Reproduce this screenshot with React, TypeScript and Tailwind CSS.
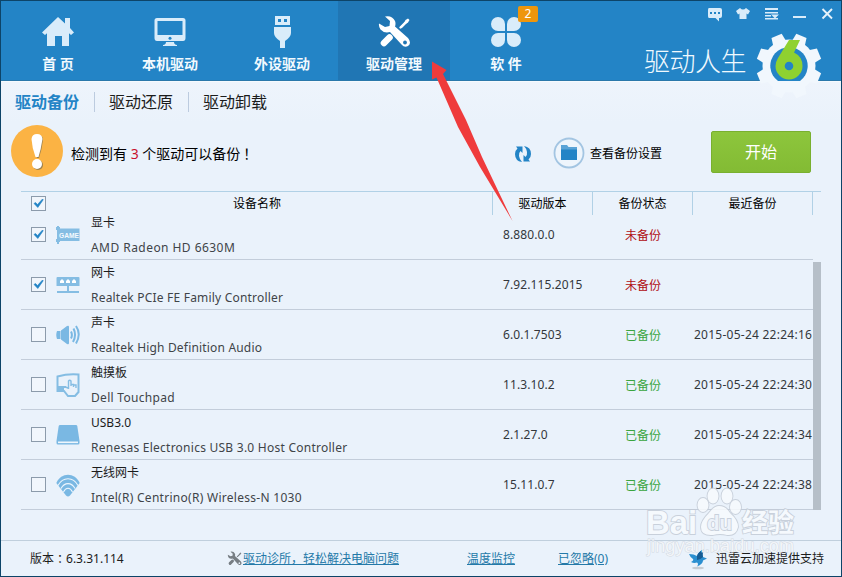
import React from 'react';
import { clsx } from 'clsx';

type Device = {
  type: string;
  name: string;
  version: string;
  date?: string;
  checked?: boolean;
  icon: React.ReactNode;
  tracking: string;
};

const HomeIcon = () => (
  <svg width="34" height="32" viewBox="0 0 34 32" fill="#d9ecfa">
    <path d="M17 1 L24 7.500 V2 H29 V12 L33 16.500 L30 19 L28 17.200 V30 H21 V20 H14 V30 H6 V17.200 L4 19 L1 16.500 Z" />
  </svg>
);

const MonitorIcon = () => (
  <svg width="34" height="32" viewBox="0 0 34 32">
    <path fill="#d9ecfa" fillRule="evenodd" d="M4 2 H30 Q32.500 2 32.500 4.500 V22 Q32.500 25 30 25 H4 Q1.500 25 1.500 22 V4.500 Q1.500 2 4 2 Z M4.500 5 V19 H29.500 V5 Z" />
    <circle cx="17" cy="22.300" r="1.500" fill="#2384c6" />
    <path fill="#d9ecfa" d="M13 26 H21 Q21 28.500 24 29 V30 H10 V29 Q13 28.500 13 26 Z" />
  </svg>
);

const UsbIcon = () => (
  <svg width="34" height="34" viewBox="0 0 34 34">
    <path fill="#d9ecfa" fillRule="evenodd" d="M10 1 H25 V10 H10 Z M13 4 V7 H16 V4 Z M19 4 V7 H22 V4 Z" />
    <path fill="#d9ecfa" d="M9 12 H26 V18 Q26 22 20 26 V33 H15 V26 Q9 22 9 18 Z" />
  </svg>
);

const ToolsIcon = ({ size = 34, color = '#fff', hole = '#2076b4' }: { size?: number; color?: string; hole?: string }) => (
  <svg width={size} height={size} viewBox="0 0 34 34" className="shrink-0">
    <path d="M24 12.500 L30 6.500" stroke={color} strokeWidth="1.800" />
    <path d="M27 8 L28.500 5 L31 3.500 L32.500 5 L31 7.500 L28.500 9 Z" fill={color} />
    <path d="M23.500 12.500 L28 8" stroke={color} strokeWidth="2.400" strokeLinecap="round" />
    <path d="M7 28 L12.500 22.500" stroke={color} strokeWidth="6.600" strokeLinecap="round" />
    <path d="M8 1.500 Q15 0 18 6 Q19 8.500 18 11.500 L31 23 Q35 28 31 31 Q27.500 33 24.500 29.500 L13 17 Q7 18.500 3.500 14.500 Q1.500 11.500 2 8.500 L8 12 L12.500 11 L13 6 Z" fill={color} />
    <circle cx="28" cy="27.500" r="1.900" fill={hole} />
  </svg>
);

const CloverIcon = () => (
  <svg width="32" height="32" viewBox="0 0 32 32" fill="#d9ecfa">
    <path d="M8 1 A7 7 0 0 1 15 8 V15 H8 A7 7 0 0 1 8 1 Z" />
    <path d="M24 1 A7 7 0 0 0 17 8 V15 H24 A7 7 0 0 0 24 1 Z" />
    <path d="M8 31 A7 7 0 0 0 15 24 V17 H8 A7 7 0 0 0 8 31 Z" />
    <path d="M24 31 A7 7 0 0 1 17 24 V17 H24 A7 7 0 0 1 24 31 Z" />
  </svg>
);

const GearLogo = () => (
  <svg width="68" height="68" viewBox="-34 -34 68 68" className="absolute left-[754px] top-[31px]">
    <g fill="#f1f7fd">
      <circle r="26.500" />
      {[22.5, 67.5, 112.5, 157.5, 202.5, 247.5, 292.5, 337.5].map((a) => (
        <path key={a} d="M-7 -24 L-5.500 -32.500 H5.500 L7 -24 Z" transform={`rotate(${a})`} />
      ))}
    </g>
    <path d="M-11 15 A18.700 18.700 0 1 1 11 15 Z" fill="#2384c6" />
    <path fill="#8fd130" fillRule="evenodd" d="M0 -26 H11 L5 -13.500 Q13.500 -9.500 13.500 0 A13.500 13.500 0 0 1 -13.500 0 Q-13.500 -4 -11 -8 Z M-4.300 0 A4.300 4.300 0 1 0 4.300 0 A4.300 4.300 0 1 0 -4.300 0 Z" />
  </svg>
);

const WindowControls = () => (
  <div className="absolute left-[706px] top-[6px] flex">
    <svg width="126" height="16" viewBox="0 0 126 16">
      <path fill="#d9ecfa" fillRule="evenodd" d="M2 1 H13 Q15 1 15 3 V9 Q15 11 13 11 H12 V14.500 L8.500 11 H2 Q1 11 1 9 V3 Q1 1 2 1 Z M3 5 V7 H5 V5 Z M7 5 V7 H9 V5 Z M11 5 V7 H13 V5 Z" />
      <path fill="#d9ecfa" d="M33 1 Q36 4 39 1 L43 4 L41 7.500 L39.500 6.500 V12 H32.500 V6.500 L31 7.500 L29 4 Z" />
      <path fill="#d9ecfa" d="M58 1 H71 V3 H58 Z M58 5 H71 V6.500 H58 Z M58 8 H64 V9.500 H58 Z M64 7.500 H72 L68 11.500 Z M58 11 H71 V12.500 H58 Z" />
      <path fill="#d9ecfa" d="M86 9 H99 V11 H86 Z" />
      <path stroke="#e5f2fb" strokeWidth="1.900" d="M115.500 2 L125 11.500 M125 2 L115.500 11.500" />
    </svg>
  </div>
);

const GameIcon = () => (
  <svg width="24" height="18" viewBox="0 0 24 18">
    <path d="M1 0 H3 V18 H1 Z M3 2.500 H23.500 V15 H3 Z M0 1 H4 V4 H0 Z M0 13 H4 V16 H0 Z" fill="#85bde3" />
    <text x="3" y="11.500" fontSize="7.500" fontWeight="700" textLength="20" lengthAdjust="spacingAndGlyphs" fill="#f4fafe" fontFamily="Liberation Sans, sans-serif">GAME</text>
  </svg>
);

const NetworkIcon = () => (
  <svg width="24" height="18" viewBox="0 0 24 18">
    <path d="M1.500 1 H22.500 Q23.500 1 23.500 2 V10 H0.500 V2 Q0.500 1 1.500 1 Z M11 10 H13 V15 H23 V17 H1 V15 H11 Z" fill="#85bde3" />
    <path d="M4 7 V4.500 H5 V3.500 H7 V4.500 H8 V7 Z M10 7 V4.500 H11 V3.500 H13 V4.500 H14 V7 Z M16 7 V4.500 H17 V3.500 H19 V4.500 H20 V7 Z" fill="#fff" />
  </svg>
);

const SpeakerIcon = () => (
  <svg width="24" height="22" viewBox="0 0 24 22" fill="none" stroke="#7ab8e3" strokeWidth="2">
    <path d="M1 7 H4.500 V15 H1 Q-0.500 11 1 7 Z M5 6.500 L11 2 Q13 1 13 3 V19 Q13 21 11 20 L5 15.500 Z" fill="#7ab8e3" stroke="none" />
    <path d="M15 7.500 Q16.800 11 15 14.500 M17.500 4.500 Q20.800 11 17 18 M20 2 Q25.500 10 20 19.500" />
  </svg>
);

const TouchpadIcon = () => (
  <svg width="24" height="24" viewBox="0 0 24 24" fill="none" stroke="#85bde3" strokeWidth="2">
    <path d="M1.500 3.500 Q12 0.500 22.500 1.500 V19 L19 23 H12 L8 18 H1.500 Z" />
    <path d="M2 14 H10 M7 14 V18" />
    <path d="M12.500 16 V8 Q13.700 6.500 15 8 V13 M15 11.500 H17.500 V14 M17.500 12 H20 V15 M12 15 L9.500 14" strokeWidth="1.400" />
    <path d="M2.500 15 H6 V17.500 H2.500 Z" fill="#85bde3" />
  </svg>
);

const DriveIcon = () => (
  <svg width="24" height="22" viewBox="0 0 24 22">
    <path d="M4 1 H20 Q21 1 21.300 2 L23.500 17 V19 Q23.500 20.500 22 20.500 H2 Q0.500 20.500 0.500 19 V17 L2.700 2 Q3 1 4 1 Z" fill="#7ab8e3" />
    <path d="M2 18.300 H22" stroke="#eef6fd" strokeWidth="1.600" />
  </svg>
);

const WifiIcon = () => (
  <svg width="24" height="23" viewBox="0 0 24 23">
    <path d="M0.300 9 C5 -2 19 -2 23.700 9 L14 21.500 Q12 23.500 10 21.500 Z" fill="#7ab8e3" />
    <path d="M2 11.500 C7 2.500 17 2.500 22 11.500 M5 14.500 C8.500 8 15.500 8 19 14.500 M7.500 18 C10 13 14 13 16.500 18" fill="none" stroke="#eef6fd" strokeWidth="1.100" />
  </svg>
);

const devices: Device[] = [
  { type: '显卡', name: 'AMD Radeon HD 6630M', version: '8.880.0.0', checked: true, icon: <GameIcon />, tracking: 'tracking-[0.45px]' },
  { type: '网卡', name: 'Realtek PCIe FE Family Controller', version: '7.92.115.2015', checked: true, icon: <NetworkIcon />, tracking: 'tracking-[0.2px]' },
  { type: '声卡', name: 'Realtek High Definition Audio', version: '6.0.1.7503', date: '2015-05-24 22:24:16', icon: <SpeakerIcon />, tracking: 'tracking-[0.18px]' },
  { type: '触摸板', name: 'Dell Touchpad', version: '11.3.10.2', date: '2015-05-24 22:24:30', icon: <TouchpadIcon />, tracking: 'tracking-[0.3px]' },
  { type: 'USB3.0', name: 'Renesas Electronics USB 3.0 Host Controller', version: '2.1.27.0', date: '2015-05-24 22:24:34', icon: <DriveIcon />, tracking: 'tracking-[0.25px]' },
  { type: '无线网卡', name: 'Intel(R) Centrino(R) Wireless-N 1030', version: '15.11.0.7', date: '2015-05-24 22:24:38', icon: <WifiIcon />, tracking: 'tracking-[0.28px]' },
];

const navItems = [
  { label: '首 页', icon: <HomeIcon /> },
  { label: '本机驱动', icon: <MonitorIcon /> },
  { label: '外设驱动', icon: <UsbIcon /> },
  { label: '驱动管理', icon: <ToolsIcon />, active: true },
  { label: '软 件', icon: <CloverIcon />, badge: '2' },
];

const Checkbox = ({ checked }: { checked?: boolean }) => (
  <span className="flex h-[15px] w-[15px] shrink-0 items-center justify-center border border-[#8c9bab] bg-[#f1f6fc]">
    {checked && (
      <svg width="11" height="11" viewBox="0 0 11 11">
        <path d="M1 5.500 L2.500 4.500 L4.500 6.500 L9.500 1 L10.200 1.800 L4.800 9.500 Z" fill="#2384c6" stroke="#2384c6" strokeWidth="0.600" />
      </svg>
    )}
  </span>
);

// Paw logo and site name over the bottom right corner
const Watermark = () => (
  <svg width="160" height="75" viewBox="0 0 160 75" className="pointer-events-none absolute left-[641px] top-[485px]">
    <g fill="#f8fbfe" stroke="#c3cbd6" strokeWidth="1.800" paintOrder="stroke" fontFamily="Liberation Sans, Noto Sans CJK SC, sans-serif" fontWeight="700" opacity="0.850">
      <text x="4" y="48" fontSize="34" textLength="51" lengthAdjust="spacingAndGlyphs">Bai</text>
      <ellipse cx="61" cy="19" rx="5.500" ry="7" />
      <ellipse cx="71" cy="10" rx="5.500" ry="7.500" />
      <ellipse cx="85" cy="10" rx="5.500" ry="7.500" />
      <ellipse cx="93.500" cy="21" rx="5.500" ry="7" />
      <path d="M77 20 Q84 20 88 27 Q96 34 96 41 Q94 50 85 49 Q78 47 71 49 Q59 50 59 41 Q59 35 67 27 Q72 20 77 20 Z" />
      <text x="65" y="44" fontSize="21" textLength="25" lengthAdjust="spacingAndGlyphs" fill="#eef3fa">du</text>
      <text x="100" y="46" fontSize="26" textLength="52">经验</text>
    </g>
    <text x="5" y="66" fontSize="18" textLength="147" fill="#fff" fillOpacity="0.700" stroke="#d3dae3" strokeWidth="1" paintOrder="stroke" fontFamily="Liberation Sans, sans-serif">jingyan.baidu.com</text>
  </svg>
);

export default function App() {
  return (
    <div className="relative flex h-[577px] w-[842px] flex-col overflow-hidden border border-[#0d4468] bg-[#eaf2fb] font-['Noto_Sans','Noto_Sans_CJK_SC',sans-serif] text-xs text-[#1c1c1c]">
      <header className="flex h-20 shrink-0 border-b border-[#2a78ab] bg-[#2384c6] pl-px">
        {navItems.map((item) => (
          <div
            key={item.label}
            className={clsx('relative flex w-28 flex-col items-center', item.active && 'bg-[#2076b4]')}
          >
            <div className="mt-[14px] flex h-[34px] items-center">{item.icon}</div>
            <span className="mt-1 whitespace-pre text-sm leading-[22px] font-bold text-[#f3fafe]">{item.label}</span>
            {item.badge && (
              <span className="absolute left-[68px] top-[5px] h-4 w-5 rounded-[2px] bg-[#ee960c] text-center leading-4 text-white">
                {item.badge}
              </span>
            )}
          </div>
        ))}
        <span className="ml-[82px] mt-[42px] text-[26px] leading-[36px] font-light tracking-[-0.5px] text-[#f0f9fe]">驱动人生</span>
      </header>

      <nav className="flex h-[42px] shrink-0 items-center border-t border-[#f6fafe] bg-gradient-to-b from-[#eef4fc] to-[#eaf2fb] pb-px pl-[14px] text-base">
        <span className="pr-[15px] leading-5 font-bold text-[#2384c6]">驱动备份</span>
        <span className="border-l border-[#bccbdf] pl-[14px] pr-[15px] leading-5">驱动还原</span>
        <span className="border-l border-[#bccbdf] px-[14px] leading-5">驱动卸载</span>
      </nav>

      <section className="flex h-[68px] shrink-0 pl-[10px]">
        <svg width="52" height="52" viewBox="0 0 52 52" className="mt-0.5">
          <circle cx="26" cy="26" r="26" fill="#fbb344" />
          <g fill="#9a8150">
            <path d="M21.500 14 Q22 10 27 10 Q32 10 32 15 Q31 24 28 33 H26 Z" />
            <circle cx="27" cy="40" r="5" />
          </g>
          <path d="M20.500 14 Q21 9 26 9 Q31 9 31.500 14 Q30 24 27.500 32 H24.500 Q21 23 20.500 14 Z" fill="#fff" />
          <circle cx="26" cy="39" r="5" fill="#fff" />
        </svg>
        <p className="ml-2 mt-5 w-[443px] text-sm leading-[22px] text-black">
          检测到有 <span className="text-[#c8102e]">3</span> 个驱动可以备份<span className="pl-[3px]">！</span>
        </p>
        <svg width="18" height="18" viewBox="0 0 18 18" className="mt-[22px]" fill="#2384c6">
          <path d="M8 17 Q1 16 1 9 Q1 5.500 3.500 3.500 L2 1.500 H8.500 V8 L6.500 6 Q4.500 8 5 11 Q5.500 14.500 8 17 Z" />
          <path d="M10 1 Q17 2 17 9 Q17 12.500 14.500 14.500 L16 16.500 H9.500 V10 L11.500 12 Q13.500 10 13 7 Q12.500 3.500 10 1 Z" />
        </svg>
        <svg width="32" height="32" viewBox="0 0 32 32" className="ml-[21px] mt-[14px]">
          <circle cx="16" cy="16" r="14.500" fill="#eef5fc" stroke="#a3c5e2" strokeWidth="1.800" />
          <path d="M8 8 H14 L15.500 10 H24 V14 H8 Z" fill="#5aa3d6" />
          <path d="M8 12.500 H24 V23 H8 Z" fill="#2384c6" />
        </svg>
        <span className="ml-[5px] mt-5 w-[121px] leading-[22px] text-black">查看备份设置</span>
        <button className="mt-2 h-[42px] w-[100px] rounded-[2px] border border-[#79b02f] bg-gradient-to-b from-[#8dc63c] to-[#83bb34] text-base text-white">
          开始
        </button>
      </section>

      <section className="ml-5 h-[319px] w-[800px] shrink-0 border-t border-[#b1d1e6]">
        <div className="flex h-6 items-start text-center leading-[23px] text-black">
          <div className="flex h-[23px] w-[471px] items-center pl-[10px]">
            <Checkbox checked />
            <span className="w-[421px] pl-px">设备名称</span>
          </div>
          <span className="h-[23px] w-[100px] border-l border-[#b1d1e6]">驱动版本</span>
          <span className="h-[23px] w-[100px] border-l border-[#b1d1e6]">备份状态</span>
          <span className="h-[23px] w-[121px] border-x border-[#b1d1e6]">最近备份</span>
        </div>

        <div className="flex h-[294px]">
          <div className="-mt-1.5 flex w-[792px] flex-col">
            {devices.map((device) => (
              <div key={device.type} className="flex h-[50px] shrink-0 items-center border-b border-[#c3cdda] pl-[10px]">
                <Checkbox checked={device.checked} />
                <span className="ml-[10px] flex w-6 items-center justify-center pt-px">{device.icon}</span>
                <div className="ml-[11px] flex w-[412px] flex-col">
                  <span className="leading-[25px]">{device.type}</span>
                  <span className={clsx('leading-[25px] whitespace-nowrap text-[#404448]', device.tracking)}>{device.name}</span>
                </div>
                <span className="w-[89px] tracking-[0.1px] text-[#33373b]">{device.version}</span>
                <span className={clsx('w-[102px] pt-0.5 text-center', device.date ? 'text-[#3ba53f]' : 'text-[#b00d12]')}>
                  {device.date ? '已备份' : '未备份'}
                </span>
                <span className="whitespace-nowrap tracking-[0.25px] text-[#33373b]">{device.date}</span>
              </div>
            ))}
          </div>
          <div className="mt-[46px] h-[248px] w-2 bg-[#b6bfc8]" />
        </div>
      </section>

      <footer className="mt-[30px] flex h-9 shrink-0 items-center border-t border-[#c0cfdd] pl-[29px] leading-4">
        <span className="w-[197px]">
          版本<span className="relative left-[3px]">：</span>6.3.31.114
        </span>
        <ToolsIcon size={15} color="#777e84" hole="#eaf2fb" />
        <a className="w-[224px] pl-px text-[#2479a8] underline">驱动诊所，轻松解决电脑问题</a>
        <a className="w-[91px] pl-px text-[#2479a8] underline">温度监控</a>
        <a className="w-[130px] pl-px text-[#2479a8] underline">已忽略(0)</a>
        <svg width="22" height="22" viewBox="0 0 22 22">
          <ellipse cx="11" cy="20" rx="6" ry="1.300" fill="#c5ccd3" />
          <path d="M2 6 Q7 6 10 8 Q11 4 17 1 Q15 6 16 9 L20 10.500 L16 12.500 Q16 16 10 18.500 Q12 16 10 14.500 Q7 15.500 4 14 Q7 12.500 6 11 Q3 9 2 6 Z" fill="#2b8fd0" />
          <path d="M10 8 Q11 4 17 1 Q15 6 16 9 Q13 12 10 12 Z" fill="#175c94" />
        </svg>
        <span className="ml-[7px] whitespace-nowrap">迅雷云加速提供支持</span>
      </footer>

      <GearLogo />
      <WindowControls />
      <svg width="90" height="165" viewBox="430 60 90 165" className="pointer-events-none absolute left-[429px] top-[59px]">
        <path d="M432 61.500 L446.500 70 L443 74 L466 120 L482 157 L512.500 221 L480 167 L458 127 L436.500 77.500 L432 79.500 Z" fill="#ef3b3c" />
      </svg>
      <Watermark />
    </div>
  );
}
